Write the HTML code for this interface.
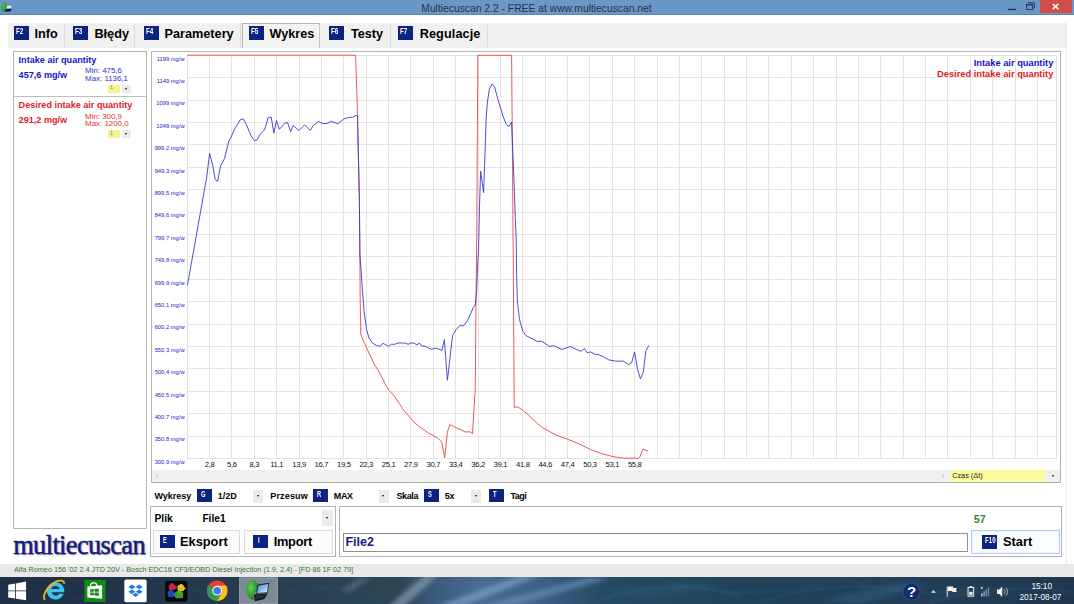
<!DOCTYPE html>
<html><head><meta charset="utf-8"><title>Multiecuscan</title>
<style>
html,body{margin:0;padding:0;}
body{width:1074px;height:604px;overflow:hidden;position:relative;background:#fff;font-family:"Liberation Sans",sans-serif;color:#000;}
.abs{position:absolute;}
.t{position:absolute;white-space:nowrap;line-height:1;}
.b{font-weight:bold;}
#titlebar{left:0;top:0;width:1074px;height:15.4px;background:#6a97c5;border-bottom:0.6px solid #5a86b3;box-sizing:border-box;}
#title{left:0;width:1073px;text-align:center;top:3.5px;font-size:10.32px;color:#22344d;}
#tabstrip{left:7.5px;top:23px;width:1059px;height:25.4px;background:#f0f0f0;}
.ico{position:absolute;width:15.2px;height:13.8px;background:#0c2481;color:#fff;font-weight:bold;font-size:8.8px;line-height:11.2px;overflow:hidden;white-space:nowrap;}
.ico span.s1{font-size:8.3px;}
.ico span{position:absolute;left:0;top:0;display:block;transform-origin:0 50%;transform:scaleX(0.76);}
.tabt{position:absolute;white-space:nowrap;line-height:1;font-weight:bold;font-size:12.7px;top:28.4px;}
.sep{position:absolute;top:24px;width:1px;height:23px;background:#dcdcdc;}
.panel{position:absolute;border:1px solid #b4b4b4;background:#fff;box-sizing:border-box;}
.yl{font-family:"Liberation Sans",sans-serif;font-size:5.8px;fill:#2020cc;}
.xl{font-family:"Liberation Sans",sans-serif;font-size:7.7px;fill:#111;letter-spacing:-0.35px;}
.dd{position:absolute;background:#eaeaea;}
.dd:after{content:"";position:absolute;left:50%;top:50%;margin-left:-1.7px;margin-top:-0.8px;border-left:1.7px solid transparent;border-right:1.7px solid transparent;border-top:2.1px solid #111;}
.btn{position:absolute;box-sizing:border-box;border:1px solid #dadada;background:#fbfbfb;}
.ctl{position:absolute;white-space:nowrap;line-height:1;font-weight:bold;font-size:9px;top:491.5px;}
#status{left:0;top:563.6px;width:1074px;height:13.4px;background:#e9e9e9;}
#taskbar{left:0;top:576.6px;width:1074px;height:27px;background:#1e3147;overflow:hidden;}
</style></head><body>

<!-- title bar -->
<div id="titlebar" class="abs"></div>
<div id="title" class="t">Multiecuscan 2.2 - FREE at www.multiecuscan.net</div>
<div class="abs" style="left:1040px;top:0;width:32px;height:13.4px;background:#cf4d48;"></div>
<svg class="abs" style="left:0;top:0" width="1074" height="16" viewBox="0 0 1074 16">
 <path d="M1052.8 4 L1058.4 9.2 M1058.4 4 L1052.8 9.2" stroke="#fff" stroke-width="1.7" fill="none"/>
 <rect x="1007.8" y="8.8" width="8" height="1.3" fill="#1d2c48"/>
 <path d="M1028 2.6H1034.4V8H1033" stroke="#2a3e62" stroke-width="1" fill="none"/>
 <rect x="1026.6" y="4.3" width="6" height="5.3" stroke="#2a3e62" stroke-width="1" fill="#6a97c5"/>
 <rect x="1026.6" y="4.1" width="6" height="1.4" fill="#2a3e62"/>
 <!-- app icon -->
 <ellipse cx="4.5" cy="7.4" rx="3.1" ry="5.2" fill="#2f9e3a"/>
 <ellipse cx="3.9" cy="6" rx="1.8" ry="3" fill="#52b85a" opacity="0.7"/>
 <path d="M6.2 5 L12.3 4.5 L11.9 9 L6 9.2Z" fill="#3e6a94"/>
 <path d="M6.8 5.6 L11.7 5.2 L11.4 8.5 L6.6 8.7Z" fill="#d4ecfb"/>
 <path d="M5.4 9 L11.8 8.7 L10.6 11.5 L5.4 11.8Z" fill="#171a33"/>
</svg>

<!-- tabs -->
<div id="tabstrip" class="abs"></div>
<div class="abs" style="left:242.4px;top:22.6px;width:77.6px;height:25.8px;background:#f3f3f3;border:1px solid #b4b4b4;border-bottom:none;border-right-color:#c8c8c8;box-sizing:border-box;"></div>
<div class="sep" style="left:63.5px"></div><div class="sep" style="left:134px"></div><div class="sep" style="left:239.5px"></div><div class="sep" style="left:389.5px"></div><div class="sep" style="left:487px"></div>
<div class="ico" style="left:14px;top:26px"><span style="left:2.4px;transform:scaleX(0.72)">F2</span></div><div class="tabt" style="left:34.5px">Info</div>
<div class="ico" style="left:73px;top:26px"><span style="left:2.4px;transform:scaleX(0.72)">F3</span></div><div class="tabt" style="left:94.4px">Błędy</div>
<div class="ico" style="left:143.5px;top:26px"><span style="left:2.4px;transform:scaleX(0.72)">F4</span></div><div class="tabt" style="left:164.5px">Parametery</div>
<div class="ico" style="left:248.5px;top:26px"><span style="left:2.4px;transform:scaleX(0.72)">F5</span></div><div class="tabt" style="left:269.5px">Wykres</div>
<div class="ico" style="left:328.5px;top:26px"><span style="left:2.4px;transform:scaleX(0.72)">F6</span></div><div class="tabt" style="left:350.9px">Testy</div>
<div class="ico" style="left:398px;top:26px"><span style="left:2.4px;transform:scaleX(0.72)">F7</span></div><div class="tabt" style="left:419.7px;letter-spacing:0.1px">Regulacje</div>

<!-- left panel -->
<div class="panel" style="left:13px;top:51px;width:134px;height:477.5px;"></div>
<div class="abs" style="left:14px;top:96px;width:132px;height:1px;background:#bdbdbd;"></div>
<div class="t b" style="left:18.6px;top:55.5px;font-size:9.1px;color:#1414cc;">Intake air quantity</div>
<div class="t b" style="left:18.6px;top:70.7px;font-size:9.1px;color:#1414cc;">457,6 mg/w</div>
<div class="t" style="left:85.1px;top:67.1px;font-size:7.9px;color:#3030cc;">Min: 475,6</div>
<div class="t" style="left:85.1px;top:75.3px;font-size:7.9px;color:#3030cc;">Max: 1136,1</div>
<div class="abs" style="left:108.3px;top:84.5px;width:12px;height:8.5px;background:#f5f590;"></div>
<div class="t" style="left:110.3px;top:86.4px;font-size:4.6px;color:#665;">1</div>
<div class="dd" style="left:122px;top:84.7px;width:9.4px;height:8.4px;"></div>

<div class="t b" style="left:18.6px;top:100.8px;font-size:9.1px;color:#e01a26;">Desired intake air quantity</div>
<div class="t b" style="left:18.6px;top:116.3px;font-size:9.1px;color:#e01a26;">291,2 mg/w</div>
<div class="t" style="left:85.1px;top:113px;font-size:7.9px;color:#dd3030;">Min: 300,9</div>
<div class="t" style="left:85.1px;top:120.2px;font-size:7.9px;color:#dd3030;">Max: 1200,0</div>
<div class="abs" style="left:108.3px;top:129.7px;width:12px;height:8.4px;background:#f5f590;"></div>
<div class="t" style="left:110.3px;top:131.6px;font-size:4.6px;color:#665;">1</div>
<div class="dd" style="left:122px;top:129.8px;width:9.4px;height:8.2px;"></div>

<!-- chart panel -->
<div class="panel" style="left:151.2px;top:51px;width:909.6px;height:431.5px;"></div>
<div class="abs" style="left:152.2px;top:470.3px;width:798.4px;height:11.3px;background:#f0f0f0;"></div>
<div class="abs" style="left:950.2px;top:470.3px;width:95.2px;height:11.3px;background:#fafa9e;"></div>
<div class="abs" style="left:1045.4px;top:470.3px;width:14.4px;height:11.3px;background:#efefef;"></div>
<div class="dd" style="left:1047px;top:470.4px;width:13.5px;height:11px;background:transparent"></div>
<div class="t" style="left:952.2px;top:472.2px;font-size:7.3px;color:#222;">Czas (Δt)</div>
<div class="t" style="left:155.2px;top:470.9px;font-size:9.5px;color:#bcbcbc;">&lsaquo;</div>
<div class="t" style="left:941.4px;top:470.9px;font-size:9.5px;color:#bcbcbc;">&rsaquo;</div>
<svg id="chart" width="1074" height="604" viewBox="0 0 1074 604" style="position:absolute;left:0;top:0">
<path d="M187.20 55.3V458.5M209.57 55.3V458.5M231.95 55.3V458.5M254.32 55.3V458.5M276.70 55.3V458.5M299.07 55.3V458.5M321.45 55.3V458.5M343.82 55.3V458.5M366.20 55.3V458.5M388.57 55.3V458.5M410.95 55.3V458.5M433.32 55.3V458.5M455.70 55.3V458.5M478.07 55.3V458.5M500.45 55.3V458.5M522.83 55.3V458.5M545.20 55.3V458.5M567.58 55.3V458.5M589.95 55.3V458.5M612.33 55.3V458.5M634.70 55.3V458.5M657.08 55.3V458.5M679.45 55.3V458.5M701.83 55.3V458.5M724.20 55.3V458.5M746.58 55.3V458.5M768.95 55.3V458.5M791.33 55.3V458.5M813.70 55.3V458.5M836.08 55.3V458.5M858.45 55.3V458.5M880.83 55.3V458.5M903.20 55.3V458.5M925.58 55.3V458.5M947.95 55.3V458.5M970.33 55.3V458.5M992.70 55.3V458.5M1015.08 55.3V458.5M1037.45 55.3V458.5M1056.5 55.3V458.5M187.2 55.30H1056.5M187.2 77.70H1056.5M187.2 100.10H1056.5M187.2 122.50H1056.5M187.2 144.90H1056.5M187.2 167.30H1056.5M187.2 189.70H1056.5M187.2 212.10H1056.5M187.2 234.50H1056.5M187.2 256.90H1056.5M187.2 279.30H1056.5M187.2 301.70H1056.5M187.2 324.10H1056.5M187.2 346.50H1056.5M187.2 368.90H1056.5M187.2 391.30H1056.5M187.2 413.70H1056.5M187.2 436.10H1056.5M187.2 458.50H1056.5" stroke="#e4e4e4" stroke-width="1" fill="none" shape-rendering="crispEdges"/>
<text x="184.6" y="60.6" text-anchor="end" class="yl">1199 mg/w</text>
<text x="184.6" y="83.0" text-anchor="end" class="yl">1149 mg/w</text>
<text x="184.6" y="105.4" text-anchor="end" class="yl">1099 mg/w</text>
<text x="184.6" y="127.8" text-anchor="end" class="yl">1049 mg/w</text>
<text x="184.6" y="150.2" text-anchor="end" class="yl">999,2 mg/w</text>
<text x="184.6" y="172.6" text-anchor="end" class="yl">949,3 mg/w</text>
<text x="184.6" y="195.0" text-anchor="end" class="yl">899,5 mg/w</text>
<text x="184.6" y="217.4" text-anchor="end" class="yl">849,6 mg/w</text>
<text x="184.6" y="239.8" text-anchor="end" class="yl">799,7 mg/w</text>
<text x="184.6" y="262.2" text-anchor="end" class="yl">749,8 mg/w</text>
<text x="184.6" y="284.6" text-anchor="end" class="yl">699,9 mg/w</text>
<text x="184.6" y="307.0" text-anchor="end" class="yl">650,1 mg/w</text>
<text x="184.6" y="329.4" text-anchor="end" class="yl">600,2 mg/w</text>
<text x="184.6" y="351.8" text-anchor="end" class="yl">550,3 mg/w</text>
<text x="184.6" y="374.2" text-anchor="end" class="yl">500,4 mg/w</text>
<text x="184.6" y="396.6" text-anchor="end" class="yl">450,5 mg/w</text>
<text x="184.6" y="419.0" text-anchor="end" class="yl">400,7 mg/w</text>
<text x="184.6" y="441.4" text-anchor="end" class="yl">350,8 mg/w</text>
<text x="184.6" y="463.8" text-anchor="end" class="yl">300,9 mg/w</text>
<text x="209.6" y="466.8" text-anchor="middle" class="xl">2,8</text>
<text x="231.9" y="466.8" text-anchor="middle" class="xl">5,6</text>
<text x="254.3" y="466.8" text-anchor="middle" class="xl">8,3</text>
<text x="276.7" y="466.8" text-anchor="middle" class="xl">11,1</text>
<text x="299.1" y="466.8" text-anchor="middle" class="xl">13,9</text>
<text x="321.4" y="466.8" text-anchor="middle" class="xl">16,7</text>
<text x="343.8" y="466.8" text-anchor="middle" class="xl">19,5</text>
<text x="366.2" y="466.8" text-anchor="middle" class="xl">22,3</text>
<text x="388.6" y="466.8" text-anchor="middle" class="xl">25,1</text>
<text x="410.9" y="466.8" text-anchor="middle" class="xl">27,9</text>
<text x="433.3" y="466.8" text-anchor="middle" class="xl">30,7</text>
<text x="455.7" y="466.8" text-anchor="middle" class="xl">33,4</text>
<text x="478.1" y="466.8" text-anchor="middle" class="xl">36,2</text>
<text x="500.4" y="466.8" text-anchor="middle" class="xl">39,1</text>
<text x="522.8" y="466.8" text-anchor="middle" class="xl">41,8</text>
<text x="545.2" y="466.8" text-anchor="middle" class="xl">44,6</text>
<text x="567.6" y="466.8" text-anchor="middle" class="xl">47,4</text>
<text x="590.0" y="466.8" text-anchor="middle" class="xl">50,3</text>
<text x="612.3" y="466.8" text-anchor="middle" class="xl">53,1</text>
<text x="634.7" y="466.8" text-anchor="middle" class="xl">55,8</text>
<polyline points="187.2,55.2 355.6,55.2 357.1,100.0 359.4,200.0 360.2,300.0 360.8,334.7 366.6,348.0 374.8,365.3 378.1,370.0 388.4,389.9 393.4,394.8 404.6,411.4 416.2,424.3 427.8,432.6 438.6,438.7 441.6,442.0 444.7,457.7 447.4,432.1 449.8,424.6 456.0,427.6 465.9,432.1 469.2,431.6 472.5,433.7 473.8,411.4 475.2,391.5 475.5,370.0 475.7,330.0 476.8,230.0 477.8,55.3 511.6,55.3 512.4,150.0 513.4,280.0 514.2,407.5 517.6,406.8 521.8,409.7 526.8,413.5 537.7,423.9 543.6,428.3 556.1,435.0 567.0,439.0 578.8,443.7 590.5,449.5 600.6,453.4 614.0,456.8 624.0,458.2 638.3,458.2 639.9,457.1 642.8,449.0 648.3,451.2" fill="none" stroke="#e8464b" stroke-width="0.9" stroke-linejoin="round"/>
<polyline points="187.4,285.3 195.0,243.0 202.6,200.0 206.6,178.0 209.6,153.3 212.7,165.4 215.2,179.6 217.7,181.3 220.5,166.2 224.4,158.7 228.9,141.1 231.6,136.0 234.8,128.5 240.3,119.8 243.2,118.8 246.2,124.3 251.2,136.0 254.5,140.7 257.1,139.9 259.9,134.4 264.6,129.8 268.3,117.3 271.3,117.3 273.8,133.2 276.5,120.4 279.4,129.3 285.0,123.1 287.6,122.6 290.6,131.8 293.1,125.5 299.0,130.5 304.7,124.8 310.2,130.5 313.2,125.5 318.6,121.5 322.4,123.5 326.9,123.5 331.3,121.3 337.8,123.8 344.2,118.8 349.2,117.3 352.6,117.3 355.9,115.4 357.5,115.9 359.4,200.0 359.9,254.0 362.4,290.0 364.1,311.5 366.6,329.7 369.0,338.0 372.4,343.0 376.5,345.5 379.8,346.3 383.1,343.3 388.4,346.3 391.4,344.3 394.7,344.3 398.0,343.0 404.6,343.0 408.3,344.3 410.9,343.0 413.7,343.0 417.1,345.0 419.2,343.0 422.0,346.0 425.3,346.3 431.1,349.3 436.1,348.0 441.9,350.4 444.4,339.7 447.4,380.2 450.2,356.2 452.6,335.5 456.0,329.7 460.1,325.1 463.4,326.1 467.5,320.6 470.9,313.2 473.3,307.4 475.3,304.9 476.7,290.0 477.3,273.1 478.5,250.0 479.5,206.2 480.6,171.1 483.6,192.6 485.1,150.0 486.1,119.5 487.3,103.0 489.4,88.9 492.2,83.9 494.7,87.3 498.0,99.7 503.0,116.2 506.3,124.5 508.8,126.5 511.6,122.0 512.3,140.0 513.7,173.0 515.4,219.5 516.2,240.0 516.6,273.1 517.4,301.3 519.5,319.5 522.8,331.1 526.0,335.6 531.0,338.2 536.9,341.3 541.9,341.3 549.4,346.4 553.6,345.7 562.0,349.4 570.4,346.5 577.1,349.7 581.3,351.4 584.3,348.2 587.1,352.7 590.5,351.9 595.5,354.4 598.0,354.4 603.1,356.6 608.9,359.9 615.6,361.1 623.2,361.1 628.7,364.5 631.6,362.8 634.6,351.9 637.4,368.7 640.4,379.0 643.3,372.0 645.8,351.1 648.8,345.5" fill="none" stroke="#3a3acc" stroke-width="0.9" stroke-linejoin="round"/>
</svg>
<div class="t b" style="right:20.7px;top:59.3px;font-size:9.3px;color:#1010d0;">Intake air quantity</div>
<div class="t b" style="right:20.7px;top:70.2px;font-size:9.3px;color:#e01a26;">Desired intake air quantity</div>

<!-- controls row -->
<div class="ctl" style="left:154.5px">Wykresy</div>
<div class="ico" style="left:197.3px;top:488.7px"><span style="left:3.6px;transform:scaleX(0.7)" class="s1">G</span></div>
<div class="ctl" style="left:217.8px">1/2D</div>
<div class="dd" style="left:253.2px;top:489.6px;width:10.3px;height:13px;"></div>
<div class="ctl" style="left:270.3px;letter-spacing:0.15px">Przesuw</div>
<div class="ico" style="left:313.2px;top:488.7px"><span style="left:3.6px;transform:scaleX(0.7)" class="s1">R</span></div>
<div class="ctl" style="left:333.8px;letter-spacing:-0.4px">MAX</div>
<div class="dd" style="left:378.5px;top:489.6px;width:10.3px;height:13px;"></div>
<div class="ctl" style="left:396.4px;letter-spacing:-0.35px">Skala</div>
<div class="ico" style="left:423.9px;top:488.7px"><span style="left:3.8px;transform:scaleX(0.7)" class="s1">S</span></div>
<div class="ctl" style="left:444.7px;letter-spacing:-0.3px">5x</div>
<div class="dd" style="left:471.2px;top:489.6px;width:10.3px;height:13px;"></div>
<div class="ico" style="left:489.2px;top:488.7px"><span style="left:3.9px;transform:scaleX(0.7)" class="s1">T</span></div>
<div class="ctl" style="left:510.4px;letter-spacing:-0.45px">Tagi</div>

<!-- Plik group -->
<div class="panel" style="left:149.8px;top:506px;width:186.4px;height:50.8px;border-color:#b2b2b2;"></div>
<div class="t b" style="left:154.5px;top:513.5px;font-size:10.3px;">Plik</div>
<div class="t b" style="left:202.4px;top:513.5px;font-size:10.2px;">File1</div>
<div class="dd" style="left:321.6px;top:510px;width:11.2px;height:16px;"></div>
<div class="btn" style="left:152.6px;top:529.6px;width:87.2px;height:24.4px;"></div>
<div class="ico" style="left:159.5px;top:534.6px"><span style="left:3.6px;transform:scaleX(0.7)" class="s1">E</span></div>
<div class="t b" style="left:180px;top:536.1px;font-size:12.8px;">Eksport</div>
<div class="btn" style="left:244.2px;top:529.6px;width:88.6px;height:24.4px;"></div>
<div class="ico" style="left:253.2px;top:534.6px"><span style="left:4.6px;transform:scaleX(0.7)" class="s1">I</span></div>
<div class="t b" style="left:273.7px;top:536.1px;font-size:12.8px;letter-spacing:-0.25px">Import</div>

<!-- right group -->
<div class="panel" style="left:339.4px;top:506px;width:722.6px;height:50.8px;border-color:#b2b2b2;"></div>
<div class="panel" style="left:342.8px;top:533.3px;width:625px;height:19.2px;border-color:#8f8f8f;"></div>
<div class="t b" style="left:345.4px;top:536.2px;font-size:12.6px;color:#1a1a8c;">File2</div>
<div class="t b" style="left:973.7px;top:513.9px;font-size:10.7px;color:#2e8b2e;">57</div>
<div class="btn" style="left:971.3px;top:529.6px;width:88.4px;height:24.6px;border-color:#b4d0ec;background:#fcfdff;box-shadow:inset 0 0 0 1px #eef4fb;"></div>
<div class="ico" style="left:982.2px;top:534.8px"><span style="left:2.7px;transform:scaleX(0.7)">F10</span></div>
<div class="t b" style="left:1003px;top:536.1px;font-size:12.8px;">Start</div>

<!-- logo -->
<div class="t" style="left:13.2px;top:531.7px;font-family:'Liberation Serif',serif;font-size:26.4px;color:#141c78;letter-spacing:-0.62px;-webkit-text-stroke:0.45px #141c78;text-shadow:1px 1.2px 1.6px rgba(40,50,120,0.6);">multiecuscan</div>

<!-- window right edge strip -->
<div class="abs" style="left:1066.4px;top:23px;width:1px;height:541px;background:#ededed;"></div>

<!-- status bar -->
<div id="status" class="abs"></div>
<div class="t" style="left:14px;top:566.2px;font-size:7.3px;color:#2e7a34;letter-spacing:-0.02px;">Alfa Romeo 156 '02 2.4 JTD 20V - Bosch EDC16 CF3/EOBD Diesel Injection (1.9, 2.4) - [FD 86 1F 02 79]</div>

<!-- taskbar -->
<div id="taskbar" class="abs"></div>
<svg class="abs" style="left:0;top:576.6px" width="1074" height="27.4" viewBox="0 576.6 1074 27.4">
<defs>
 <linearGradient id="tbg" x1="0" x2="1" y1="0" y2="0">
  <stop offset="0" stop-color="#1f2f45"/><stop offset="0.093" stop-color="#21334a"/><stop offset="0.25" stop-color="#273e4f"/>
  <stop offset="0.37" stop-color="#2c4654"/><stop offset="0.405" stop-color="#3b5b7c"/><stop offset="0.447" stop-color="#4a6c93"/>
  <stop offset="0.503" stop-color="#3e6086"/><stop offset="0.56" stop-color="#264b64"/><stop offset="0.70" stop-color="#1f4259"/>
  <stop offset="0.84" stop-color="#223f58"/><stop offset="1" stop-color="#1f3850"/>
 </linearGradient>
 <linearGradient id="scr" x1="0" x2="1" y1="0" y2="1"><stop offset="0" stop-color="#2f7fd6"/><stop offset="1" stop-color="#e8f4ff"/></linearGradient>
 <radialGradient id="glb" cx="0.4" cy="0.35" r="0.7"><stop offset="0" stop-color="#5fd35a"/><stop offset="1" stop-color="#157a1c"/></radialGradient>
 <filter id="bl"><feGaussianBlur stdDeviation="2.2"/></filter>
 <filter id="bl2"><feGaussianBlur stdDeviation="0.8"/></filter>
</defs>
<rect x="0" y="576" width="1074" height="29" fill="url(#tbg)"/>
<g filter="url(#bl)" opacity="0.6">
 <path d="M388 606 L424 575 L438 575 L404 606Z" fill="#93a4b8"/>
 <path d="M436 606 L520 575 L540 575 L462 606Z" fill="#86a8cf"/>
 <path d="M480 606 L590 576 L610 578 L510 606Z" fill="#6d92ba"/>
 <path d="M340 590 L360 577 L372 577 L350 592Z" fill="#5b7486"/>
 <path d="M820 600 L900 582 L930 584 L860 604Z" fill="#2f5a7c"/>
 <path d="M600 590 L700 582 L720 588 L640 598Z" fill="#2a5570"/>
</g>
<g opacity="0.35" fill="none" stroke-width="1.2" filter="url(#bl2)">
 <path d="M600 600 C640 585 690 580 740 596" stroke="#3f7392"/>
 <path d="M660 578 C700 592 760 598 820 584" stroke="#3a6a8c"/>
 <path d="M760 602 C800 588 850 582 900 590" stroke="#3f7392"/>
 <path d="M840 578 C880 590 930 598 990 586" stroke="#3a6a8c"/>
 <path d="M930 602 C970 590 1020 584 1074 592" stroke="#3f7392"/>
 <path d="M270 596 C300 586 340 584 390 598" stroke="#3d5c6a"/>
 <path d="M60 602 C100 590 160 584 230 594" stroke="#34506e"/>
</g>
<!-- start -->
<path d="M8 584.4 L15 583.1 V590 H8Z M15.8 583 L25.9 581.1 V590 H15.8Z M8 590.8 H15 V598.2 L8 597Z M15.8 590.8 H25.9 V599.8 L15.8 598.3Z" fill="#fff"/>
<!-- IE -->
<g>
 <path d="M55.4 581.8 a8.7 8.7 0 1 0 8.2 11.6 h-4.6 a4.2 4.2 0 0 1 -7.6 -1.6 h12.7 a8.7 8.7 0 0 0 -8.7 -10z M51.2 588.6 a4.2 3.6 0 0 1 8.3 0z" fill="#3cc2f2"/>
 <path d="M44.4 599 C42 594.5 47.5 585.5 55.5 581.5 C60 579.4 63.6 579.8 63.9 582.8" stroke="#f2b323" stroke-width="1.8" fill="none" stroke-linecap="round"/>
</g>
<!-- store -->
<rect x="84.2" y="579.6" width="21.3" height="22" fill="#0f8c12"/>
<path d="M90.3 585.8 a3.3 3.3 0 0 1 6.6 0" stroke="#fff" stroke-width="1.3" fill="none"/>
<path d="M87.2 586 L102 584.9 V598.4 L87.2 597.2Z" fill="#fff"/>
<path d="M90 588.9 L93.6 588.6 V591.4 H90Z M94.3 588.5 L98.6 588.1 V591.4 H94.3Z M90 592 H93.6 V595 L90 594.7Z M94.3 592 H98.6 V595.5 L94.3 595.1Z" fill="#0f8c12"/>
<!-- dropbox -->
<rect x="124.2" y="579.2" width="22.3" height="22.6" rx="2" fill="#fff"/>
<path d="M131.7 584.2 L135.4 586.5 L131.7 588.8 L128.1 586.5Z M139.1 584.2 L142.7 586.5 L139.1 588.8 L135.4 586.5Z M131.7 589 L135.4 591.3 L131.7 593.6 L128.1 591.3Z M139.1 589 L142.7 591.3 L139.1 593.6 L135.4 591.3Z M135.4 592.3 L138.7 594.4 L135.4 596.7 L132.1 594.4Z" fill="#1f7fe0"/>
<!-- puzzle -->
<rect x="165" y="580.4" width="22.2" height="21" rx="3.2" fill="#08080a"/>
<rect x="168.6" y="584" width="6.6" height="5.6" rx="1.6" fill="#c8243c"/>
<circle cx="172.2" cy="584.2" r="1.5" fill="#b8248a"/>
<circle cx="175.4" cy="587" r="1.3" fill="#c8243c"/>
<rect x="177.4" y="584.6" width="6.6" height="6.2" rx="1.6" fill="#d8c41c"/>
<circle cx="181" cy="584.8" r="1.5" fill="#e0cc24"/>
<circle cx="184.2" cy="588" r="1.2" fill="#d8c41c"/>
<rect x="167.6" y="590.4" width="6.4" height="6.2" rx="1.5" fill="#2248b8"/>
<circle cx="170.6" cy="590.2" r="1.3" fill="#3a3aa8"/>
<rect x="174.8" y="591.2" width="8.2" height="6.6" rx="1.6" fill="#3fa024"/>
<circle cx="175" cy="594" r="1.5" fill="#2a86b0"/>
<circle cx="179" cy="591" r="1.4" fill="#8ab820"/>
<!-- chrome -->
<circle cx="217.1" cy="590.3" r="10.3" fill="#e34133"/>
<path d="M217.1 590.3 L208.2 585.15 A10.3 10.3 0 0 0 212 599.2 Z" fill="#2e9e4a"/>
<path d="M208.2 585.2 A10.3 10.3 0 0 0 217.1 600.6 L222 592 L212.4 592.8Z" fill="#2e9e4a"/>
<path d="M217.1 600.6 A10.3 10.3 0 0 0 226 585.15 L217.1 585.3 L221.6 592.8 Z" fill="#fbc21a"/>
<circle cx="217.1" cy="590.3" r="4.9" fill="#f3f3f3"/>
<circle cx="217.1" cy="590.3" r="3.8" fill="#3c7fe6"/>
<!-- active app -->
<rect x="239.3" y="577.2" width="38.5" height="26.4" fill="#7c8a95"/>
<rect x="239.6" y="577.5" width="37.9" height="26" fill="none" stroke="#9eabb4" stroke-width="0.7"/>
<path d="M252 580 C247 581.5 245.6 587 246.6 591.5 C247.4 595.6 250.4 599 253.8 599.6 C252.6 596.5 253.6 593.6 255.4 591.8 C257.8 589.4 258.4 585.6 257 582.6 C256 580.8 254 579.6 252 580Z" fill="url(#glb)"/>
<path d="M257.4 584.2 L269.2 582.4 L267.6 592.6 L256 593.4Z" fill="#1a2634"/>
<path d="M258.3 585 L268.2 583.5 L266.9 591.8 L257.1 592.5Z" fill="url(#scr)"/>
<path d="M253.6 594.2 L267.4 593 L264.2 598.6 L254.8 600.8Z" fill="#121519"/>
<path d="M255 595 L265.4 594 L263.4 597.2 L255.6 598.8Z" fill="#2a3038"/>
<!-- tray -->
<circle cx="911.6" cy="591.4" r="8.6" fill="#122a66"/>
<circle cx="911.6" cy="591.4" r="8.6" fill="none" stroke="#2c4f94" stroke-width="1"/>
<text x="911.6" y="597" text-anchor="middle" font-family="Liberation Sans, sans-serif" font-weight="bold" font-size="15" fill="#fff">?</text>
<path d="M931.2 592.4 L933.6 589.8 L936 592.4Z" fill="#f0f0f0"/>
<path d="M947.4 586 V596.4" stroke="#f0f0f0" stroke-width="1"/>
<path d="M948 586.2 H953.4 V587.6 H957.2 L956 589.6 L957.2 591.6 H952.4 V590.6 H948Z" fill="#f0f0f0"/>
<rect x="968.2" y="587" width="5.6" height="8.8" fill="none" stroke="#f0f0f0" stroke-width="1"/>
<rect x="969.7" y="585.8" width="2.6" height="1.2" fill="#f0f0f0"/>
<rect x="969.4" y="591.4" width="3.2" height="3.4" fill="#f0f0f0"/>
<path d="M982 586.4 V588.6 M981 587.5 H983" stroke="#e8e8e8" stroke-width="0.8"/>
<rect x="981.4" y="593" width="1.3" height="3" fill="#cfd6dc"/><rect x="983.6" y="591" width="1.3" height="5" fill="#9aa6b0"/><rect x="985.8" y="589" width="1.3" height="7" fill="#8594a0"/><rect x="988" y="587" width="1.3" height="9" fill="#7b8a96"/>
<path d="M997.2 589 H999.4 L1002.4 586 V596.6 L999.4 593.6 H997.2Z" fill="#f0f0f0"/>
<path d="M1004.2 588.8 A3.6 3.6 0 0 1 1004.2 593.8 M1006 587.2 A5.8 5.8 0 0 1 1006 595.4" stroke="#c8d0d8" stroke-width="0.8" fill="none"/>
<text x="1041.9" y="588.5" text-anchor="middle" font-family="Liberation Sans, sans-serif" font-size="8.2" fill="#fff">15:10</text>
<text x="1040.6" y="600" text-anchor="middle" font-family="Liberation Sans, sans-serif" font-size="8.2" fill="#fff">2017-08-07</text>
</svg>

</body></html>
